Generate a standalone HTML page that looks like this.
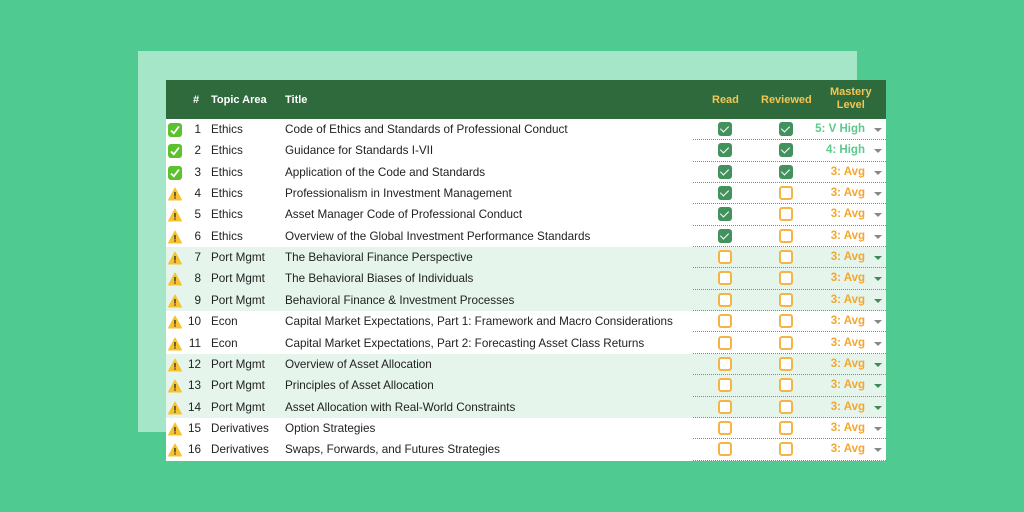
<!DOCTYPE html>
<html><head><meta charset="utf-8"><style>
body{margin:0;width:1024px;height:512px;background:#4fca90;position:relative;overflow:hidden;font-family:"Liberation Sans",sans-serif}
.panel{position:absolute;left:138px;top:51px;width:719px;height:381px;background:#a6e6c8}
.tbl{position:absolute;left:166px;top:80px;width:720px;height:381px;background:#fff}
.hdr{position:absolute;left:0;top:0;width:720px;height:39px;background:#2f6a3d;font-weight:bold;font-size:11px;color:#fff}
.hdr span{position:absolute;top:14px}
.hdr .y{color:#f3c653}
.row{position:absolute;left:0;width:720px;height:21.35px;font-size:11.7px;color:#222}
.row.g{background:#e5f5ec}
.row span{position:absolute;top:4px;white-space:nowrap}
.dot{position:absolute;left:527px;right:0;bottom:0;border-bottom:1px dotted #888}
.cb{position:absolute;top:3px;width:14px;height:14px;border-radius:3px;box-sizing:border-box}
.on{background:#43925d}
.on:after{content:"";position:absolute;left:4px;top:2px;width:4px;height:7px;border:solid #fff;border-width:0 1.5px 1.5px 0;transform:rotate(45deg)}
.off{border:2px solid #f5b443;background:#fff}
.m{font-weight:bold;font-size:11.5px}
.ar{position:absolute;right:4px;top:9px;width:0;height:0;border-left:4px solid transparent;border-right:4px solid transparent;border-top:4px solid #888}
.ic{position:absolute;left:2px;top:4px;width:14px;height:14px}
</style></head><body>
<div class="panel"></div>
<div class="tbl">
<div class="hdr"><span style="left:27px">#</span><span style="left:45px">Topic Area</span><span style="left:119px">Title</span><span class="y" style="left:546px">Read</span><span class="y" style="left:595px">Reviewed</span><span class="y" style="left:664px;top:6px;text-align:center;line-height:13px">Mastery<br>Level</span></div>
<div id="rows"></div>
</div>
<script>
var d=[[1,"Ethics","Code of Ethics and Standards of Professional Conduct",1,1,"5: V High"],
[2,"Ethics","Guidance for Standards I-VII",1,1,"4: High"],
[3,"Ethics","Application of the Code and Standards",1,1,"3: Avg"],
[4,"Ethics","Professionalism in Investment Management",1,0,"3: Avg"],
[5,"Ethics","Asset Manager Code of Professional Conduct",1,0,"3: Avg"],
[6,"Ethics","Overview of the Global Investment Performance Standards",1,0,"3: Avg"],
[7,"Port Mgmt","The Behavioral Finance Perspective",0,0,"3: Avg"],
[8,"Port Mgmt","The Behavioral Biases of Individuals",0,0,"3: Avg"],
[9,"Port Mgmt","Behavioral Finance & Investment Processes",0,0,"3: Avg"],
[10,"Econ","Capital Market Expectations, Part 1: Framework and Macro Considerations",0,0,"3: Avg"],
[11,"Econ","Capital Market Expectations, Part 2: Forecasting Asset Class Returns",0,0,"3: Avg"],
[12,"Port Mgmt","Overview of Asset Allocation",0,0,"3: Avg"],
[13,"Port Mgmt","Principles of Asset Allocation",0,0,"3: Avg"],
[14,"Port Mgmt","Asset Allocation with Real-World Constraints",0,0,"3: Avg"],
[15,"Derivatives","Option Strategies",0,0,"3: Avg"],
[16,"Derivatives","Swaps, Forwards, and Futures Strategies",0,0,"3: Avg"]];
var h="";
d.forEach(function(r,i){
var g=r[1]=="Port Mgmt";
var ok=i<3;
var ic=ok?'<svg class="ic" viewBox="0 0 14 14"><rect width="14" height="14" rx="3" fill="#5cc12e"/><path d="M3 7.5l2.8 2.8L11 3.5" stroke="#fff" stroke-width="1.8" fill="none"/></svg>':'<svg class="ic" viewBox="0 0 14 14"><path d="M7 1L13.5 13H0.5Z" fill="#f7c22f" stroke="#f7c22f" stroke-linejoin="round"/><rect x="6.3" y="5" width="1.4" height="4.5" fill="#333"/><rect x="6.3" y="10.3" width="1.4" height="1.4" fill="#333"/></svg>';
var mc=i==0||i==1?"#5cc98d":"#f5a62b";
h+='<div class="row'+(g?' g':'')+'" style="top:'+(39+i*21.35)+'px">'+ic+
'<span style="right:685px">'+r[0]+'</span><span style="left:45px">'+r[1]+'</span><span style="left:119px">'+r[2]+'</span>'+
'<div class="cb '+(r[3]?'on':'off')+'" style="left:552px"></div><div class="cb '+(r[4]?'on':'off')+'" style="left:613px"></div>'+
'<span class="m" style="color:'+mc+';right:21px">'+r[5]+'</span><div class="ar"'+(g?' style="border-top-color:#3f8a55"':'')+'></div><div class="dot"></div></div>';
});
document.getElementById("rows").innerHTML=h;
</script>
</body></html>
